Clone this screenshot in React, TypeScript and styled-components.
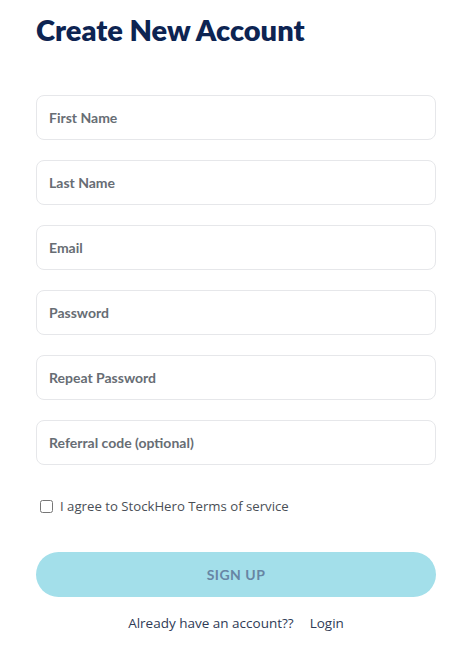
import styled, { createGlobalStyle } from "styled-components"

const GlobalStyle = createGlobalStyle`
	body {
		margin: 0;
		background: #ffffff;
		font-family: Lato, "Open Sans", sans-serif;
	}
`

const Container = styled.div`
	width: 400px;
	padding: 12px 0 0 36px;
`

const Title = styled.h1`
	margin: 0 0 47px;
	font-family: Lato, sans-serif;
	font-weight: 800;
	font-size: 29px;
	line-height: 36px;
	color: #0d2452;
`

const Form = styled.form`
	display: flex;
	flex-direction: column;
	gap: 20px;
`

const Input = styled.input`
	box-sizing: border-box;
	width: 400px;
	height: 45px;
	padding: 0 12px;
	border: 1px solid #e6e7ea;
	border-radius: 8px;
	font-family: Lato, sans-serif;
	font-size: 14px;
	font-weight: 700;
	color: #374151;
	outline: none;

	&::placeholder {
		color: #676d74;
		opacity: 1;
	}
`

const CheckRow = styled.label`
	display: flex;
	align-items: center;
	gap: 7px;
	margin: 32px 0 0 4px;
	font-family: "Open Sans", sans-serif;
	font-size: 13.2px;
	color: #4a4f56;
`

const Check = styled.input`
	margin: 0;
	width: 13px;
	height: 13px;
`

const Button = styled.button`
	margin-top: 37px;
	width: 400px;
	height: 45px;
	border: none;
	border-radius: 23px;
	background: #a3dfea;
	font-family: Lato, sans-serif;
	font-weight: 700;
	font-size: 14px;
	letter-spacing: 0.5px;
	color: #6785a4;
`

const Footer = styled.div`
	margin-top: 17px;
	display: flex;
	justify-content: center;
	gap: 16px;
	font-family: "Open Sans", sans-serif;
	font-size: 13.5px;
	color: #2f3b56;
`

const LoginLink = styled.a`
	color: #2f3b56;
	text-decoration: none;
`

const fields = [
	"First Name",
	"Last Name",
	"Email",
	"Password",
	"Repeat Password",
	"Referral code (optional)",
]

export default function App() {
	return (
		<Container>
			<GlobalStyle />
			<Title>Create New Account</Title>
			<Form>
				{fields.map((f) => (
					<Input
						key={f}
						placeholder={f}
						type={f.includes("Password") ? "password" : "text"}
					/>
				))}
			</Form>
			<CheckRow>
				<Check type="checkbox" />
				I agree to StockHero Terms of service
			</CheckRow>
			<Button>SIGN UP</Button>
			<Footer>
				<span>Already have an account??</span>
				<LoginLink href="#">Login</LoginLink>
			</Footer>
		</Container>
	)
}
